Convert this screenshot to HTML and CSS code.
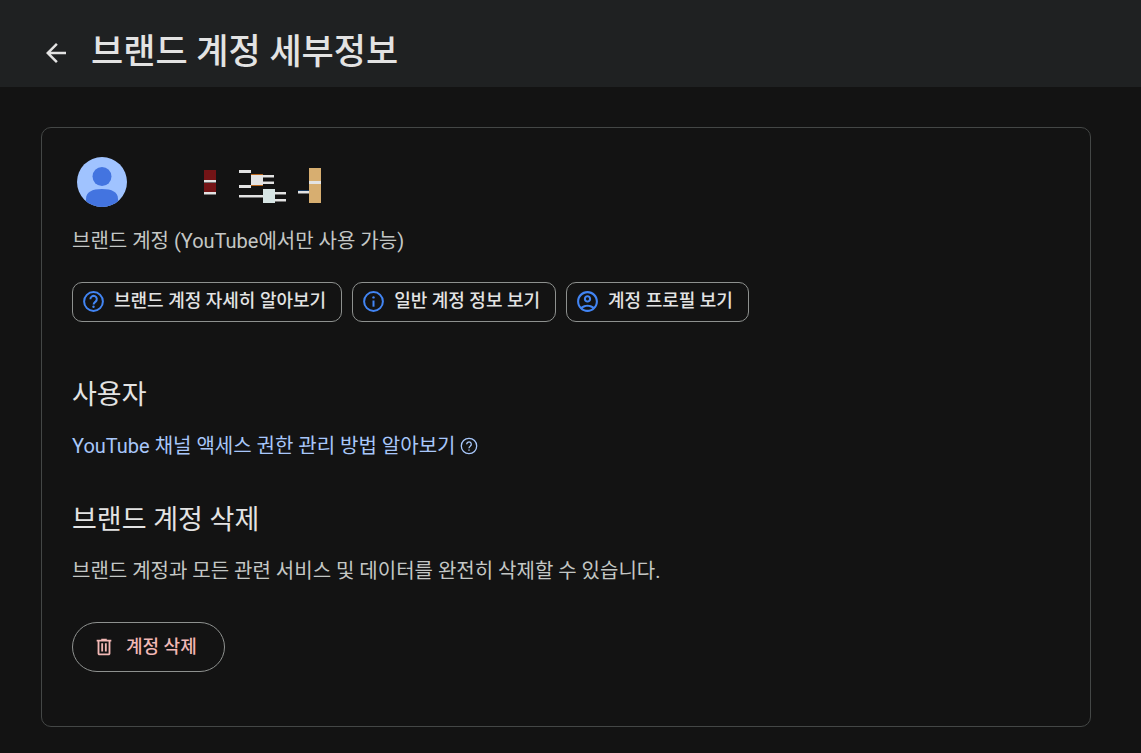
FILE: index.html
```html
<!DOCTYPE html>
<html lang="ko">
<head>
  <meta charset="UTF-8" />
  <meta name="viewport" content="width=device-width, initial-scale=1.0"/>
  <title>브랜드 계정 세부정보</title>
  <link rel="stylesheet" href="styles.css">
</head>
<body>
  <header class="header">
    <a class="back" href="#" aria-label="뒤로">
      <svg width="30" height="30" viewBox="0 0 24 24" fill="currentColor"><path d="M20 11H7.830l5.590-5.590L12 4l-8 8 8 8 1.410-1.410L7.830 13H20v-2z"/></svg>
    </a>
    <h1>브랜드 계정 세부정보</h1>
  </header>

  <main class="card">
    <!-- Account -->
    <div class="account">
      <svg class="avatar" width="50" height="50" viewBox="0 0 50 50">
        <defs><clipPath id="avatarClip"><circle cx="25" cy="25" r="25"/></clipPath></defs>
        <circle cx="25" cy="25" r="25" fill="#a0c3ff"/>
        <g fill="#4374e0" clip-path="url(#avatarClip)">
          <circle cx="25" cy="19.500" r="9.500"/>
          <path d="M9 42c0-7 6-10 16-10s16 3 16 10v8H9z"/>
        </g>
      </svg>
      <svg class="masked-name" width="118" height="36" viewBox="0 0 118 36" shape-rendering="crispEdges">
        <path fill="#731416" d="M0 3h12v24H0z"/>
        <path fill="#e3e3e3" d="M0 13h12v2H0zM0 25h12v2H0zM35 3h12v3H35zM47 8h12v10H47zM59 8h11v2H59zM59 15h11v2H59zM35 18h12v3H35zM35 28h24v2H35zM71 25h11v2H71zM71 32h11v2H71zM94 24h11v2H94z"/>
        <path fill="#767676" d="M0 15h12v1H0zM0 27h12v1H0zM59 10h11v1H59zM59 14h11v1H59zM35 30h24v1H35zM71 27h11v1H71zM71 34h11v1H71zM94 26h11v1H94z"/>
        <path fill="#b8651b" d="M47 7h12v1H47zM47 18h12v1H47z"/>
        <path fill="#17385c" d="M94 23h11v1H94z"/>
        <path fill="#d7e5e4" d="M59 22h12v14H59z"/>
        <path fill="#d7ae70" d="M105 1h12v35h-12z"/>
        <path fill="#e3e3e3" d="M105 14h12v3h-12z"/>
      </svg>
    </div>
    <p class="text">브랜드 계정 (YouTube에서만 사용 가능)</p>

    <div class="chips">
      <button class="chip">
        <svg width="25" height="25" viewBox="0 0 25 25" fill="none" stroke="currentColor" stroke-width="2"><circle cx="12.500" cy="12.500" r="9.400"/><path d="M9.400 10.300a3.200 3.200 0 1 1 5.200 2.300c-1.200 1-2 1.500-2 2.900"/><circle cx="12.500" cy="17.800" r="1.200" fill="currentColor" stroke="none"/></svg>
        브랜드 계정 자세히 알아보기
      </button>
      <button class="chip">
        <svg width="25" height="25" viewBox="0 0 25 25" fill="none" stroke="currentColor" stroke-width="2"><circle cx="12.500" cy="12.500" r="9.400"/><path d="M12.500 11.500v6.200"/><circle cx="12.500" cy="8.400" r="1.200" fill="currentColor" stroke="none"/></svg>
        일반 계정 정보 보기
      </button>
      <button class="chip">
        <svg width="25" height="25" viewBox="0 0 24 24" fill="currentColor"><path d="M12 2C6.480 2 2 6.480 2 12s4.480 10 10 10 10-4.480 10-10S17.520 2 12 2zM7.350 18.500C8.660 17.560 10.260 17 12 17s3.340.56 4.650 1.500C15.340 19.440 13.740 20 12 20s-3.340-.56-4.650-1.500zm10.790-1.380C16.450 15.800 14.320 15 12 15s-4.450.8-6.140 2.120C4.700 15.730 4 13.950 4 12c0-4.420 3.580-8 8-8s8 3.580 8 8c0 1.950-.7 3.730-1.860 5.120zM12 6c-1.930 0-3.500 1.570-3.500 3.500S10.070 13 12 13s3.500-1.570 3.500-3.500S13.930 6 12 6zm0 5c-.83 0-1.500-.67-1.500-1.500S11.170 8 12 8s1.500.67 1.500 1.500S12.830 11 12 11z"/></svg>
        계정 프로필 보기
      </button>
    </div>

    <!-- Users -->
    <h2>사용자</h2>
    <p class="text">
      <a class="link" href="#">YouTube 채널 액세스 권한 관리 방법 알아보기
        <svg width="18" height="18" viewBox="0 0 18 18" fill="none" stroke="currentColor"><circle cx="9" cy="9" r="7.700" stroke-width="1.300"/><path d="M6.700 7.300a2.300 2.300 0 1 1 3.700 1.800C9.500 9.800 9 10.100 9 11.200M9 12.400v1.300" stroke-width="1.300"/></svg>
      </a>
    </p>

    <!-- Delete account -->
    <h2>브랜드 계정 삭제</h2>
    <p class="text">브랜드 계정과 모든 관련 서비스 및 데이터를 완전히 삭제할 수 있습니다.</p>
    <button class="delete">
      <svg width="22" height="22" viewBox="0 0 24 24" fill="currentColor"><path d="M15 4V3H9v1H4v2h1v13c0 1.100.9 2 2 2h10c1.100 0 2-.9 2-2V6h1V4h-5zm2 15H7V6h10v13zM9 8h2v9H9zm4 0h2v9h-2z"/></svg>
      계정 삭제
    </button>
  </main>
</body>
</html>
```
FILE: styles.css
```css
* {
  box-sizing: border-box;
}

body {
  margin: 0;
  background: #131313;
  color: #e3e3e3;
  font-family: Roboto, 'Noto Sans CJK KR', sans-serif;
}

.header {
  display: flex;
  align-items: center;
  gap: 20px;
  padding: 27px 41px 8px;
  background: #1f2122;
}

.back {
  display: flex;
  color: inherit;
}

h1, h2, p {
  margin: 0;
}

h1 {
  font-size: 35px;
  line-height: 52px;
  font-weight: 500;
}

.card {
  margin: 40px 50px 26px 41px;
  padding: 29px 30px 54px;
  border: 1px solid #444746;
  border-radius: 10px;
}

.account {
  display: flex;
  align-items: center;
  gap: 77px;
  padding-left: 5px;
  margin-bottom: 19px;
}

.masked-name {
  margin-top: 6px;
}

.text {
  font-size: 20px;
  line-height: 30px;
  color: #c4c7c5;
}

.chips {
  display: flex;
  flex-wrap: wrap;
  gap: 10px;
  margin: 26px 0 53px;
}

.chip, .delete {
  display: flex;
  align-items: center;
  background: none;
  border: 1px solid #8e918f;
  font-family: inherit;
  font-size: 18px;
  line-height: 26px;
  font-weight: 500;
  cursor: pointer;
}

.chip {
  gap: 8px;
  height: 40px;
  padding: 0 15px 2px 8px;
  border-radius: 10px;
  color: #e3e3e3;
}

.chip svg {
  color: #4285f4;
}

.chip:hover, .delete:hover {
  background: #1f2122;
}

h2 {
  font-size: 27px;
  line-height: 40px;
  font-weight: 400;
  margin-bottom: 16px;
}

.text + h2 {
  margin-top: 39px;
}

.link {
  color: #a8c7fa;
  text-decoration: none;
}

.link svg {
  vertical-align: -2px;
}

.delete {
  gap: 11px;
  height: 50px;
  margin-top: 36px;
  padding: 0 27px 0 20px;
  border-radius: 25px;
  color: #f2b8b5;
}
```
